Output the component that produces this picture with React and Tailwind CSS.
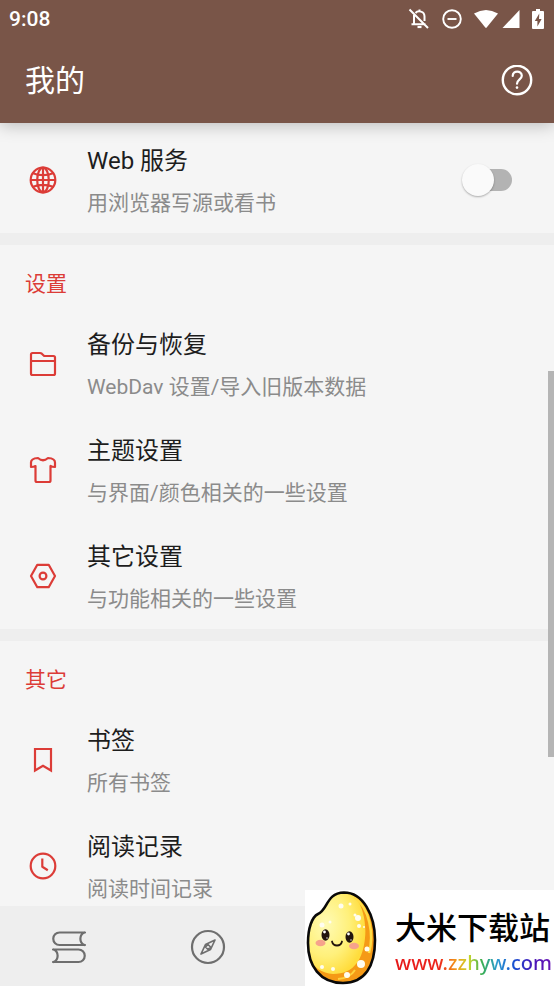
import React from "react";

const line = {
  fill: "none",
  stroke: "currentColor",
  strokeWidth: 2.2,
  strokeLinejoin: "round",
  strokeLinecap: "round",
};

function GlobeIcon() {
  return (
    <svg viewBox="0 0 28 28" className="size-7" {...line}>
      <circle cx="14" cy="14" r="12.3" />
      <ellipse cx="14" cy="14" rx="5.8" ry="12.3" />
      <path d="M14 2v24M2 14h24M4.2 7.2c5.4 2.6 14.2 2.6 19.6 0M4.2 20.8c5.4-2.6 14.2-2.6 19.6 0" />
    </svg>
  );
}

function FolderIcon() {
  return (
    <svg viewBox="0 0 28 28" className="size-7" {...line}>
      <path d="M2 23.500V4.500q0-1.500 1.500-1.500h7.500q1 0 1.800.7l2.400 2.300H24.500q1.500 0 1.500 1.500v16q0 1.500-1.500 1.500h-21Q2 25 2 23.500zM2 11h24" />
    </svg>
  );
}

function ShirtIcon() {
  return (
    <svg viewBox="0 0 28 28" className="size-7" {...line}>
      <path d="M9 2Q14 6.500 19 2Q26 2.500 26 6.500v4.500q-2.800 0-4.500-1V24.500q0 1.500-1.500 1.500H8q-1.500 0-1.500-1.500V10q-1.700 1-4.500 1V6.500Q2 2.500 9 2z" />
    </svg>
  );
}

function HexIcon() {
  return (
    <svg viewBox="0 0 28 28" className="size-7" {...line}>
      <path d="M8.300 2.800h11.400l6.300 11.200-6.300 11.200H8.300L2 14z" />
      <circle cx="14" cy="14" r="3.400" />
    </svg>
  );
}

function BookmarkIcon() {
  return (
    <svg viewBox="0 0 28 28" className="size-7" {...line} strokeLinejoin="miter">
      <path d="M6 3h16v21.500l-8-4.800-8 4.800z" />
    </svg>
  );
}

function ClockIcon() {
  return (
    <svg viewBox="0 0 28 28" className="size-7" {...line} strokeLinecap="butt">
      <circle cx="14" cy="14" r="12.300" />
      <path d="M13.300 6.500v8.300l5.500 3.400" />
    </svg>
  );
}

function StatusIcons() {
  return (
    <div className="flex items-center text-white">
      <svg viewBox="0 0 22 22" className="mr-3 size-[22px]" fill="none" stroke="currentColor" strokeWidth="2">
        <path d="M1.500 1.500l18.500 18.500M6 7v9M3.500 16.300h14M16.500 13V8.500c0-5.500-6.500-6.300-9-3.500M11.500 4V1.500" />
        <path d="M9.500 19h4" strokeWidth="2.200" />
      </svg>
      <svg viewBox="0 0 20 20" className="mr-3 size-5" fill="none" stroke="currentColor" strokeWidth="1.900">
        <circle cx="10" cy="10" r="8.800" />
        <path d="M5.500 10h9" />
      </svg>
      <svg viewBox="0 0 24 20" className="mr-1 h-5 w-6" fill="currentColor">
        <path d="M0 4.500Q12-2.500 24 4.500L12.700 18.500q-.7.800-1.400 0z" />
      </svg>
      <svg viewBox="0 0 18 20" className="mr-3 h-5 w-[18px]" fill="currentColor">
        <path d="M17.500 1v18H.5z" />
      </svg>
      <svg viewBox="0 0 12 20" className="h-5 w-3" fill="currentColor">
        <path fillRule="evenodd" d="M4 0h4v2h3q1 0 1 1v16q0 1-1 1H1q-1 0-1-1V3q0-1 1-1h3zM7.300 4.500L2.800 12h2.600v5.500L9.600 10H7z" />
      </svg>
    </div>
  );
}

function RowText({ title, detail }) {
  return (
    <span className="flex flex-col gap-1.5 pt-[3px]">
      <span className="text-2xl leading-9 text-[#1d1d1d]">{title}</span>
      <span className="text-[21px] leading-9 text-[#8b8b8b]">{detail}</span>
    </span>
  );
}

function Row({ icon, title, detail }) {
  return (
    <button type="button" className="flex h-[106px] w-full items-center text-left">
      <span className="ml-[29px] mr-[30px] shrink-0 text-[#dc3c37]">{icon}</span>
      <RowText title={title} detail={detail} />
    </button>
  );
}

function Section({ title, children }) {
  return (
    <section className="border-t-12 border-[#eeeeee]">
      <h2 className="flex h-[66px] items-center px-[25px] pt-3.5 text-[21px] text-[#dc3c37]">{title}</h2>
      {children}
    </section>
  );
}

function RiceMascot() {
  return (
    <svg viewBox="0 0 76 96" className="h-24 w-[76px] shrink-0">
      <defs>
        <radialGradient id="rice" cx="0.350" cy="0.400" r="0.650">
          <stop offset="0" stopColor="#fffbb5" />
          <stop offset="0.600" stopColor="#fff07a" />
          <stop offset="1" stopColor="#ffdc3c" />
        </radialGradient>
        <clipPath id="body">
          <path d="M39 2.500C58 2.500 70 25 70 50C70 76 60 93 38 93C15 93 3 76 3 53C3 38 7 27 13 24C23 20 21 3 39 2.500z" />
        </clipPath>
      </defs>
      <g clipPath="url(#body)">
        <path fill="#f59a16" d="M0 0h76v96H0z" />
        <path fill="url(#rice)" d="M41 1C56 5 62 30 60 48C58 68 50 84 28 84C14 83 2 74 0 53C0 27 18 0 41 1z" />
        <path d="M49 7C65 18 69 45 64 63" fill="none" stroke="#ffdc45" strokeWidth="2.500" />
        <path d="M50 80Q45 88 33 89" fill="none" stroke="#ffd23c" strokeWidth="2" />
        <g fill="#fffdf0">
          <circle cx="36" cy="16" r="2.500" /><circle cx="45" cy="14" r="1.500" />
          <circle cx="50" cy="25" r="1.500" /><circle cx="53" cy="28" r="3" />
          <circle cx="54" cy="36" r="2" /><circle cx="59" cy="37" r="1" />
          <circle cx="17" cy="35" r="2.500" /><circle cx="25" cy="32" r="1.500" />
          <circle cx="62" cy="59" r="2.500" /><circle cx="56" cy="74" r="4" />
          <circle cx="42" cy="85" r="3" /><circle cx="17" cy="77" r="2" />
          <circle cx="28" cy="79" r="2" />
        </g>
      </g>
      <path fill="none" stroke="#090909" strokeWidth="2.600" d="M39 2.500C58 2.500 70 25 70 50C70 76 60 93 38 93C15 93 3 76 3 53C3 38 7 27 13 24C23 20 21 3 39 2.500z" />
      <g fill="#f6a28c"><ellipse cx="15.500" cy="53" rx="5" ry="3.300" /><ellipse cx="49" cy="56" rx="5" ry="3.300" /></g>
      <g fill="#22130e"><ellipse cx="20.500" cy="45" rx="4" ry="5.800" /><ellipse cx="44.500" cy="47" rx="4" ry="5.800" /></g>
      <g fill="#fff"><circle cx="19.500" cy="42" r="1.400" /><circle cx="43.500" cy="44" r="1.400" /><circle cx="22" cy="48" r="0.700" /><circle cx="46" cy="50" r="0.700" /></g>
      <path d="M27 51.500q1 4 5 4q4 0 5-4" fill="none" stroke="#21130c" strokeWidth="1.800" strokeLinecap="round" />
    </svg>
  );
}

export default function App() {
  return (
    <div className="relative flex h-screen flex-col overflow-hidden bg-[#f5f5f5] font-[Roboto,'Noto_Sans_CJK_SC',sans-serif]">
      <header className="relative z-10 shrink-0 bg-[#795548] text-white shadow-[0_2px_16px_rgba(0,0,0,0.25)]">
        <div className="flex h-[38px] items-center justify-between pl-[9px] pr-[10px]">
          <span className="pt-0.5 text-[21px] font-medium">9:08</span>
          <StatusIcons />
        </div>
        <div className="flex h-[85px] items-center justify-between pl-[25px] pr-[21px]">
          <h1 className="text-[30px] font-normal">我的</h1>
          <button type="button" aria-label="帮助">
            <svg viewBox="0 0 32 32" className="size-8" {...line}>
              <circle cx="16" cy="15" r="14.200" strokeWidth="2.400" />
              <path d="M11.700 11C11.700 5 20.800 5.200 20.800 10.700C20.800 14.200 16 14.500 16 18.700" />
              <path d="M16 22.500v.1" strokeWidth="2.600" />
            </svg>
          </button>
        </div>
      </header>

      <main className="min-h-0 flex-1 overflow-hidden">
        <div className="flex h-[110px] items-center pr-[42px] pt-1">
          <span className="ml-[29px] mr-[30px] shrink-0 text-[#dc3c37]"><GlobeIcon /></span>
          <label htmlFor="web-service" className="flex-1">
            <RowText title="Web 服务" detail="用浏览器写源或看书" />
          </label>
          <input
            id="web-service"
            type="checkbox"
            role="switch"
            className="relative h-[22px] w-[42px] appearance-none rounded-full bg-[#b3b3b3] before:absolute before:-left-2 before:-top-[5px] before:size-8 before:rounded-full before:bg-[#fafafa] before:shadow-[0_1px_2px_rgba(0,0,0,0.3)] checked:before:left-4"
          />
        </div>
        <Section title="设置">
          <Row icon={<FolderIcon />} title="备份与恢复" detail="WebDav 设置/导入旧版本数据" />
          <Row icon={<ShirtIcon />} title="主题设置" detail="与界面/颜色相关的一些设置" />
          <Row icon={<HexIcon />} title="其它设置" detail="与功能相关的一些设置" />
        </Section>
        <Section title="其它">
          <Row icon={<BookmarkIcon />} title="书签" detail="所有书签" />
          <Row icon={<ClockIcon />} title="阅读记录" detail="阅读时间记录" />
        </Section>
      </main>

      <nav className="relative z-10 grid h-20 shrink-0 grid-cols-4 bg-[#eeeeee] text-[#6e6e6e]">
        <button type="button" aria-label="书架" className="flex items-center justify-center pt-0.5">
          <svg viewBox="0 0 36 36" className="size-9" {...line} strokeLinejoin="miter">
            <path d="M34 3.500H8.500a6.200 6.200 0 000 12.500H34M33.500 3.500C28 5.500 28 14 33.500 16M2 20.500h25.500a6.200 6.200 0 010 12.500H2M2.500 20.500C8 22.500 8 31 2.500 33" />
          </svg>
        </button>
        <button type="button" aria-label="发现" className="flex items-center justify-center pt-0.5">
          <svg viewBox="0 0 36 36" className="size-9" {...line}>
            <circle cx="18" cy="18" r="16" />
            <path d="M25 11l-9.500 4.500L11 25l9.500-4.500zM18 15.500l2.500 2.500-2.500 2.500-2.500-2.500z" strokeWidth="1.700" />
          </svg>
        </button>
      </nav>

      <div className="absolute right-0 top-[371px] z-10 h-[386px] w-[6px] bg-[#b5b5b5]" />

      <aside className="absolute bottom-0 right-0 z-20 flex h-24 w-[249px] items-center bg-white">
        <RiceMascot />
        <div className="ml-[14px] flex flex-col gap-0.5 whitespace-nowrap pt-3">
          <strong className="text-[31px] font-medium leading-9 text-black">大米下载站</strong>
          <a
            href="#site"
            className="self-start bg-[linear-gradient(90deg,#e51919_0%,#ec241c_28%,#f29a19_39%,#c9d52a_47%,#36ad58_56%,#2c9bd0_65%,#194fd0_76%,#4a16b8_88%,#6915b4_100%)] bg-clip-text font-['Noto_Sans',sans-serif] text-[20px] font-medium leading-7 text-transparent"
          >
            www.zzhyw.com
          </a>
        </div>
      </aside>
    </div>
  );
}
